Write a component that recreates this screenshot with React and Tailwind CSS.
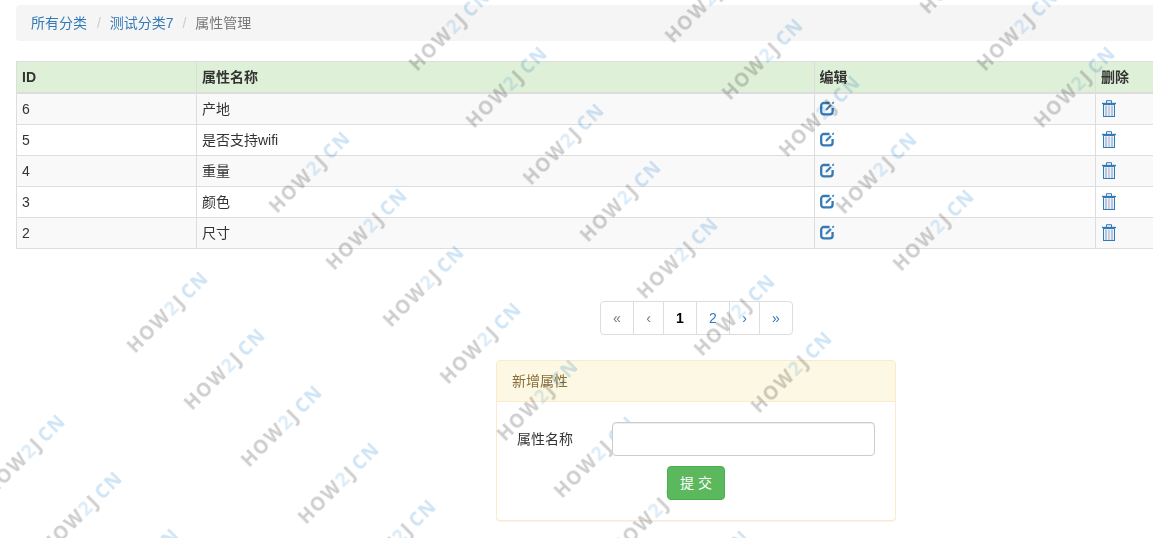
const FONT = { fontFamily: '"Liberation Sans", "Noto Sans CJK SC", sans-serif' };

const rows = [
  { id: 6, name: '产地' },
  { id: 5, name: '是否支持wifi' },
  { id: 4, name: '重量' },
  { id: 3, name: '颜色' },
  { id: 2, name: '尺寸' },
];

const pages = [
  { label: '«', cls: 'w-[34px] rounded-l text-[#777]' },
  { label: '‹', cls: 'w-[31px] text-[#777]' },
  { label: '1', cls: 'w-[34px] font-bold text-black' },
  { label: '2', cls: 'w-[34px] text-[#337ab7]' },
  { label: '›', cls: 'w-[31px] text-[#337ab7]' },
  { label: '»', cls: 'w-[34px] rounded-r text-[#337ab7]' },
];

// watermark lattice: each chain steps (57,57)
const chains = [
  [25, 455, 3],
  [168, 312, 5],
  [310, 172, 8],
  [450, 30, 7],
  [706, 2, 5],
  [961, -27, 3],
];
const marks = chains.flatMap(([x, y, n]) =>
  Array.from({ length: n }, (_, i) => ({ x: x + i * 57, y: y + i * 57 }))
);

function Watermark({ x, y }) {
  return (
    <div
      className="absolute -translate-x-1/2 -translate-y-1/2 -rotate-45 whitespace-nowrap text-[19px] leading-none font-bold tracking-[1.5px] text-[#cecece] mix-blend-multiply blur-[0.4px] pointer-events-none"
      style={{ left: x, top: y, fontFamily: '"Open Sans", sans-serif' }}
    >
      HOW<span className="text-[#dcecf8]">2</span>J<span className="text-[5px] text-[#dcecf8]">.</span>
      <span className="text-[#cfe4f5]">CN</span>
    </div>
  );
}

function EditIcon() {
  return (
    <svg width="15" height="15" viewBox="0 0 15 15" className="-mt-[2px] block" fill="none" stroke="#337ab7">
      <path d="M9.6 2H3.8a2.6 2.6 0 0 0-2.6 2.6v6.2a2.6 2.6 0 0 0 2.6 2.6H10a2.6 2.6 0 0 0 2.6-2.6V7" strokeWidth="2.3" />
      <path d="M5.8 9.2l.4-1.6 4-4 1.2 1.2-4 4z" fill="#337ab7" strokeWidth="0.6" />
      <path d="M12 2l1.2-1.2.9.9-1.2 1.2z" fill="#337ab7" strokeWidth="0.4" />
    </svg>
  );
}

function TrashIcon() {
  return (
    <svg width="14" height="17" viewBox="0 0 14 17" className="-mt-[2px] block" fill="none">
      <path d="M4.5 3V.7h5V3" stroke="#337ab7" />
      <path d="M0 3.5h14" stroke="#337ab7" strokeWidth="1.4" />
      <rect x="1.5" y="4.5" width="11" height="12" fill="#eef3f9" stroke="#337ab7" />
      <path d="M4 5.5v10.5" stroke="#8fb5dc" strokeWidth="1.4" />
      <path d="M7 5.5v10.5" stroke="#c4b6d2" strokeWidth="1.4" />
      <path d="M10 5.5v10.5" stroke="#8fb5dc" strokeWidth="1.4" />
    </svg>
  );
}

export default function App() {
  return (
    <div className="relative w-[1153px] h-[538px] overflow-hidden bg-white text-sm text-[#333]" style={FONT}>
      <div className="w-[1392px] px-4 pt-[5px]">
        {/* Breadcrumb */}
        <div className="flex h-9 items-center rounded bg-[#f5f5f5] px-[15px] leading-5">
          <a className="text-[#337ab7]">所有分类</a>
          <span className="ml-[5px] px-[5px] text-[#ccc]">/&nbsp;</span>
          <a className="text-[#337ab7]">测试分类7</a>
          <span className="ml-[4px] px-[5px] text-[#ccc]">/&nbsp;</span>
          <span className="text-[#777]">属性管理</span>
        </div>

        {/* Table */}
        <table className="mt-5 w-[1360px] table-fixed border-collapse leading-5">
          <colgroup>
            <col className="w-[180px]" />
            <col className="w-[617.5px]" />
            <col className="w-[281.5px]" />
            <col className="w-[281px]" />
          </colgroup>
          <thead>
            <tr className="bg-[#dff0d8] text-left">
              <th className="border border-b-2 border-[#ddd] p-[5px]">ID</th>
              <th className="border border-b-2 border-[#ddd] p-[5px]">属性名称</th>
              <th className="border border-b-2 border-[#ddd] p-[5px]">编辑</th>
              <th className="border border-b-2 border-[#ddd] p-[5px]">删除</th>
            </tr>
          </thead>
          <tbody>
            {rows.map((row, i) => (
              <tr key={row.id} className={i % 2 === 0 ? 'bg-[#f9f9f9]' : 'bg-white'}>
                <td className="border border-[#ddd] p-[5px]">{row.id}</td>
                <td className="border border-[#ddd] p-[5px]">{row.name}</td>
                <td className="border border-[#ddd] p-[5px]">
                  <EditIcon />
                </td>
                <td className="border border-[#ddd] p-[5px]">
                  <div className="pl-[1px]">
                    <TrashIcon />
                  </div>
                </td>
              </tr>
            ))}
          </tbody>
        </table>

        {/* Pagination */}
        <div className="mt-[52px] flex justify-center">
          {pages.map((p, i) => (
            <a
              key={p.label}
              className={`flex h-[34px] items-center justify-center border border-[#ddd] bg-white pl-px ${i > 0 ? '-ml-px' : ''} ${p.cls}`}
            >
              {p.label}
            </a>
          ))}
        </div>

        {/* Add panel */}
        <div className="mx-auto mt-[25px] h-[161px] w-[400px] rounded border border-[#faebcc] bg-white shadow-[0_1px_1px_rgba(0,0,0,0.05)]">
          <div className="h-[41px] rounded-t-[3px] border-b border-[#faebcc] bg-[#fcf8e3] px-[15px] py-[10px] leading-5 text-[#8a6d3b]">
            新增属性
          </div>
          <div className="pt-5">
            <div className="flex items-center">
              <label className="ml-5 w-[95px]">属性名称</label>
              <input className="relative z-10 h-[34px] w-[263px] rounded border border-[#ccc] bg-white shadow-[inset_0_1px_1px_rgba(0,0,0,0.075)]" />
            </div>
            <div className="mt-[10px] flex justify-center">
              <button className="relative z-10 h-[34px] w-[58px] rounded border border-[#4cae4c] bg-[#5cb85c] text-white">提 交</button>
            </div>
          </div>
        </div>
      </div>

      {marks.map((m) => (
        <Watermark key={`${m.x}-${m.y}`} x={m.x} y={m.y} />
      ))}
    </div>
  );
}
